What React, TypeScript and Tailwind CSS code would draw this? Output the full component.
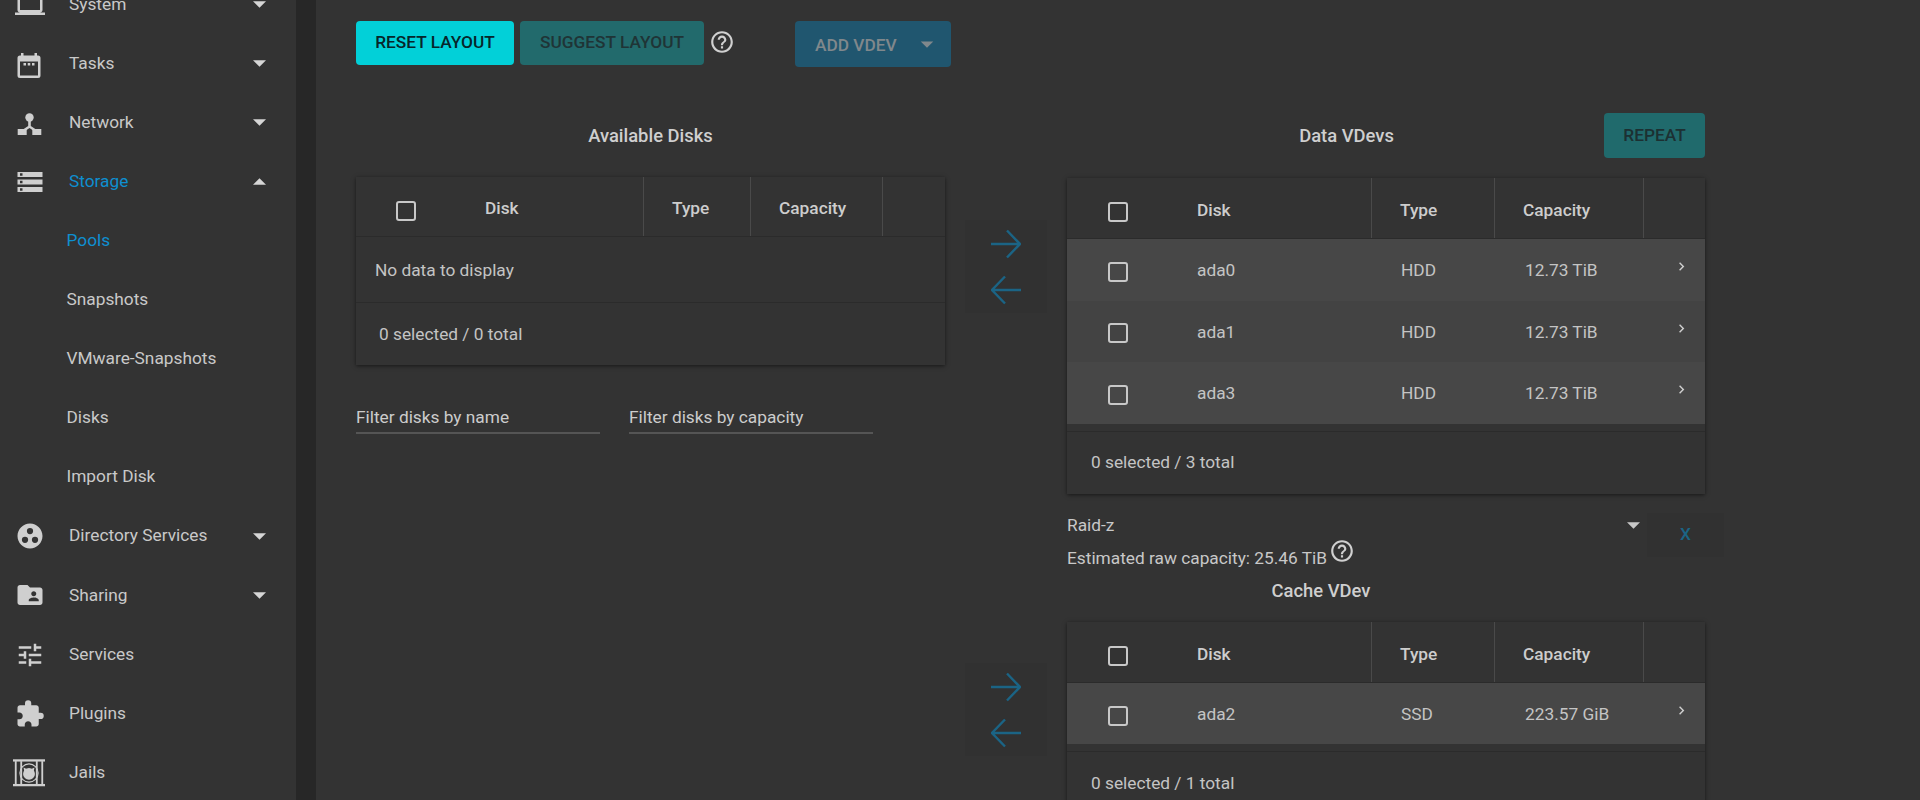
import type { ReactNode } from "react";
import {
  MdLaptop,
  MdStorage,
  MdGroupWork,
  MdFolderShared,
  MdTune,
  MdExtension,
  MdHelpOutline,
  MdChevronRight,
  MdArrowDropDown,
} from "react-icons/md";

function TasksIcon() {
  return (
    <svg viewBox="0 0 30 30" className="h-[30px] w-[30px]" fill="currentColor">
      <g transform="translate(-1 1.500)">
        <path d="M7 2.500h2.500v2.500h11V2.500H23V5h1a2.500 2.500 0 0 1 2.500 2.500V25a2.500 2.500 0 0 1-2.500 2.500H6A2.500 2.500 0 0 1 3.500 25V7.500A2.500 2.500 0 0 1 6 5h1zM6 11v14h18V11zM9.500 12.500h2.500v2.500H9.500zM13.750 12.500h2.500v2.500h-2.500zM18 12.500h2.500v2.500H18z" fillRule="evenodd" />
      </g>
    </svg>
  );
}

function NetworkIcon() {
  return (
    <svg viewBox="0 0 30 30" className="h-[30px] w-[30px]" fill="currentColor">
      <circle cx="14.500" cy="9.500" r="4.200" />
      <path d="M13.200 12h2.600v6l6 4-1.500 2-5.800-4-5.800 4-1.500-2 6-4z" />
      <rect x="2.700" y="21" width="9" height="6" />
      <rect x="17.300" y="21" width="9" height="6" />
    </svg>
  );
}

function JailsIcon() {
  return (
    <svg viewBox="0 0 35 30" className="-ml-[2px] h-[30px] w-[35px]" fill="currentColor">
      <rect x="0" y="0" width="35" height="2.500" />
      <rect x="0" y="27" width="35" height="2.500" />
      <rect x="2" y="2" width="2" height="26" />
      <rect x="8" y="2" width="2" height="26" />
      <rect x="25" y="2" width="2" height="26" />
      <rect x="31" y="2" width="2" height="26" />
      <circle cx="17.500" cy="15" r="10" fill="none" stroke="currentColor" strokeWidth="1.200" />
      <circle cx="17.500" cy="16" r="6.500" />
      <path d="M11.500 9l4 2-3 3zM23.500 9l-4 2 3 3z" />
    </svg>
  );
}

const Caret = ({ up }: { up?: boolean }) => (
  <svg viewBox="0 0 12 6" className={`h-[7px] w-[13px] ${up ? "rotate-180" : ""}`} fill="currentColor">
    <path d="M0 0h12L6 6z" />
  </svg>
);

type NavItem = { label: string; icon?: ReactNode; caret?: "up" | "down"; active?: boolean };

const NAV: NavItem[] = [
  { label: "System", icon: <MdLaptop size={30} />, caret: "down" },
  { label: "Tasks", icon: <TasksIcon />, caret: "down" },
  { label: "Network", icon: <NetworkIcon />, caret: "down" },
  { label: "Storage", icon: <MdStorage size={30} />, caret: "up", active: true },
  { label: "Pools", active: true },
  { label: "Snapshots" },
  { label: "VMware-Snapshots" },
  { label: "Disks" },
  { label: "Import Disk" },
  { label: "Directory Services", icon: <MdGroupWork size={30} />, caret: "down" },
  { label: "Sharing", icon: <MdFolderShared size={30} />, caret: "down" },
  { label: "Services", icon: <MdTune size={30} /> },
  { label: "Plugins", icon: <MdExtension size={30} /> },
  { label: "Jails", icon: <JailsIcon /> },
];

function Sidebar() {
  return (
    <aside className="-mt-[25px] w-[296px] shrink-0 bg-[#333333] text-[17.300px] text-[#c9c9c9]">
      {NAV.map((item) => (
        <div key={item.label} className="flex h-[59.100px] items-center pr-[30px]">
          {item.icon ? (
            <div className="ml-[15px] mr-[24px] flex h-[30px] w-[30px] shrink-0 items-center justify-center text-[#cfcfcf]">
              {item.icon}
            </div>
          ) : (
            <div className="w-[66.500px] shrink-0" />
          )}
          <span className={`flex-1 ${item.active ? "text-[#0e8fd0]" : ""}`}>{item.label}</span>
          {item.caret && (
            <span className="text-[#d6d6d6]">
              <Caret up={item.caret === "up"} />
            </span>
          )}
        </div>
      ))}
    </aside>
  );
}

type Disk = { name: string; type: string; capacity: string };

const Checkbox = () => <div className="h-[20px] w-[20px] rounded-[3px] border-[2.500px] border-[#c8c8c8]" />;

// left table and right tables have different column stops
const WIDE = {
  head: "h-[61px]",
  disk: "w-[305px]",
  type: "w-[123px]",
  cap: "w-[149px]",
  total: "w-[638px]",
  check: "w-[130px]",
};
const NARROW = {
  head: "h-[60px]",
  disk: "w-[288px]",
  type: "w-[107px]",
  cap: "w-[132px]",
  total: "w-[589px]",
  check: "w-[129px]",
};

function DiskTable({
  cols,
  rows,
  footer,
  footerClass,
  empty,
}: {
  cols: typeof WIDE;
  rows: Disk[];
  footer: string;
  footerClass: string;
  empty?: boolean;
}) {
  return (
    <div className={`${cols.total} bg-[#333333] text-[17.300px] text-[#c4c4c4] shadow-[0_1px_4px_rgba(0,0,0,0.55)]`}>
      <div className={`${cols.head} flex items-stretch border-b border-[#2b2b2b] font-medium text-[#cdcdcd]`}>
        <div className={`${cols.disk} flex shrink-0 items-center border-r border-[#4a4a4a]`}>
          <div className={`${cols.check} flex shrink-0 justify-center pr-[29px] pt-[8px]`}>
            <Checkbox />
          </div>
          <span className="pt-[5px]">Disk</span>
        </div>
        <div className={`${cols.type} flex shrink-0 items-center border-r border-[#4a4a4a] pl-[28px] pt-[5px]`}>Type</div>
        <div className={`${cols.cap} flex shrink-0 items-center border-r border-[#4a4a4a] pl-[28px] pt-[5px]`}>Capacity</div>
      </div>
      {empty ? (
        <div className="flex h-[65px] items-center pl-[19px] pt-[2px]">No data to display</div>
      ) : (
        <div className="pb-[7px]">
          {rows.map((r, i) => (
            <div
              key={r.name}
              className={`flex h-[61.500px] items-center ${i % 2 === 0 ? "bg-[#474747]" : "bg-[#434343]"}`}
            >
              <div className={`${cols.disk} flex shrink-0 items-center`}>
                <div className={`${cols.check} flex shrink-0 justify-center pr-[29px] pt-[4px]`}>
                  <Checkbox />
                </div>
                <span className="pt-[3px]">{r.name}</span>
              </div>
              <div className={`${cols.type} shrink-0 pl-[29px] pt-[3px]`}>{r.type}</div>
              <div className={`${cols.cap} shrink-0 pl-[30px] pt-[3px]`}>{r.capacity}</div>
              <MdChevronRight size={17} className="ml-[29px] -mt-[6px] text-[#cfcfcf]" />
            </div>
          ))}
        </div>
      )}
      <div className={`flex h-[63px] items-center border-t border-[#2b2b2b] ${footerClass}`}>{footer}</div>
    </div>
  );
}

function ArrowPanel({ className }: { className: string }) {
  return (
    <div className={`flex h-[93px] w-[82px] flex-col items-center justify-center gap-[16px] bg-[#313131] text-[#1b6485] ${className}`}>
      <svg viewBox="0 0 30 30" className="h-[30px] w-[30px]" fill="none" stroke="currentColor" strokeWidth="2.400">
        <path d="M0 15h29M16 1.500 29 15 16 28.500" />
      </svg>
      <svg viewBox="0 0 30 30" className="h-[30px] w-[30px]" fill="none" stroke="currentColor" strokeWidth="2.400">
        <path d="M30 15H1M14 1.500 1 15l13 13.500" />
      </svg>
    </div>
  );
}

function FilterInput({ label }: { label: string }) {
  return (
    <div className="w-[244px] border-b-2 border-[#555555] pb-[4px] text-[17.300px] leading-[22px] text-[#cccccc]">{label}</div>
  );
}

const HEADING = "font-medium text-[18.400px] text-[#cfcfcf]";

const DATA_DISKS: Disk[] = [
  { name: "ada0", type: "HDD", capacity: "12.73 TiB" },
  { name: "ada1", type: "HDD", capacity: "12.73 TiB" },
  { name: "ada3", type: "HDD", capacity: "12.73 TiB" },
];
const CACHE_DISKS: Disk[] = [{ name: "ada2", type: "SSD", capacity: "223.57 GiB" }];

export default function App() {
  return (
    <div className="flex h-[800px] w-[1920px] overflow-hidden bg-[#333333] font-['Roboto',sans-serif]">
      <Sidebar />
      <div className="w-[20px] shrink-0 bg-[#272727]" />
      <main className="flex-1 pl-[40px] pt-[21px]">
        {/* Toolbar */}
        <div className="flex items-start text-[17.300px] font-medium">
          <button type="button" className="h-[44px] w-[158px] rounded-[4px] bg-[#02d0d8] text-[#07262a]">
            RESET LAYOUT
          </button>
          <button type="button" className="ml-[6px] h-[44px] w-[184px] rounded-[4px] bg-[#226a6c] text-[#1f3436]">
            SUGGEST LAYOUT
          </button>
          <MdHelpOutline size={26} className="ml-[5px] mt-[8px] text-[#d0d0d0]" />
          <button
            type="button"
            className="ml-[60px] flex h-[46px] w-[156px] items-center rounded-[4px] bg-[#20566f] pl-[20px] text-[#80888c]"
          >
            <span className="pt-[4px]">ADD VDEV</span>
            <MdArrowDropDown size={30} className="ml-[15px] -mt-[1px]" />
          </button>
        </div>

        <div className="mt-[46px] flex items-start">
          {/* Available disks */}
          <div className="w-[589px] shrink-0">
            <div className={`flex h-[45px] items-center justify-center ${HEADING}`}>Available Disks</div>
            <div className="mt-[19px]">
              <DiskTable cols={NARROW} rows={[]} empty footer="0 selected / 0 total" footerClass="pl-[23px] pt-[2px]" />
            </div>
            <div className="mt-[41px] flex gap-[29px]">
              <FilterInput label="Filter disks by name" />
              <FilterInput label="Filter disks by capacity" />
            </div>
          </div>

          {/* Move buttons */}
          <div className="ml-[20px] w-[82px] shrink-0">
            <ArrowPanel className="mt-[107px]" />
            <ArrowPanel className="mt-[350px]" />
          </div>

          {/* Data and cache vdevs */}
          <div className="ml-[20px] w-[638px] shrink-0">
            <div className="flex h-[45px] items-center">
              <div className={`flex-1 pl-[22px] text-center ${HEADING}`}>Data VDevs</div>
              <button type="button" className="h-[45px] w-[101px] rounded-[4px] bg-[#206a6c] text-[17.300px] font-medium text-[#1c3032]">
                REPEAT
              </button>
            </div>
            <div className="mt-[20px]">
              <DiskTable cols={WIDE} rows={DATA_DISKS} footer="0 selected / 3 total" footerClass="pl-[24px]" />
            </div>
            <div className="mt-[19px] flex w-[657px] items-start text-[17.300px] text-[#c8c8c8]">
              <div className="flex-1">
                <div className="flex items-center pr-[7px]">
                  <span className="flex-1">Raid-z</span>
                  <Caret />
                </div>
                <div className="mt-[8px] flex items-start">
                  <span>Estimated raw capacity: 25.46 TiB</span>
                  <MdHelpOutline size={26} className="ml-[2px] -mt-[8px] text-[#d0d0d0]" />
                </div>
              </div>
              <div className="flex h-[44px] w-[77px] shrink-0 items-center justify-center bg-[#313131] pt-[1px] font-medium text-[#1b6485]">
                X
              </div>
            </div>
            <div className={`mt-[5px] pr-[130px] text-center ${HEADING}`}>Cache VDev</div>
            <div className="mt-[17px]">
              <DiskTable cols={WIDE} rows={CACHE_DISKS} footer="0 selected / 1 total" footerClass="pl-[24px]" />
            </div>
          </div>
        </div>
      </main>
    </div>
  );
}
